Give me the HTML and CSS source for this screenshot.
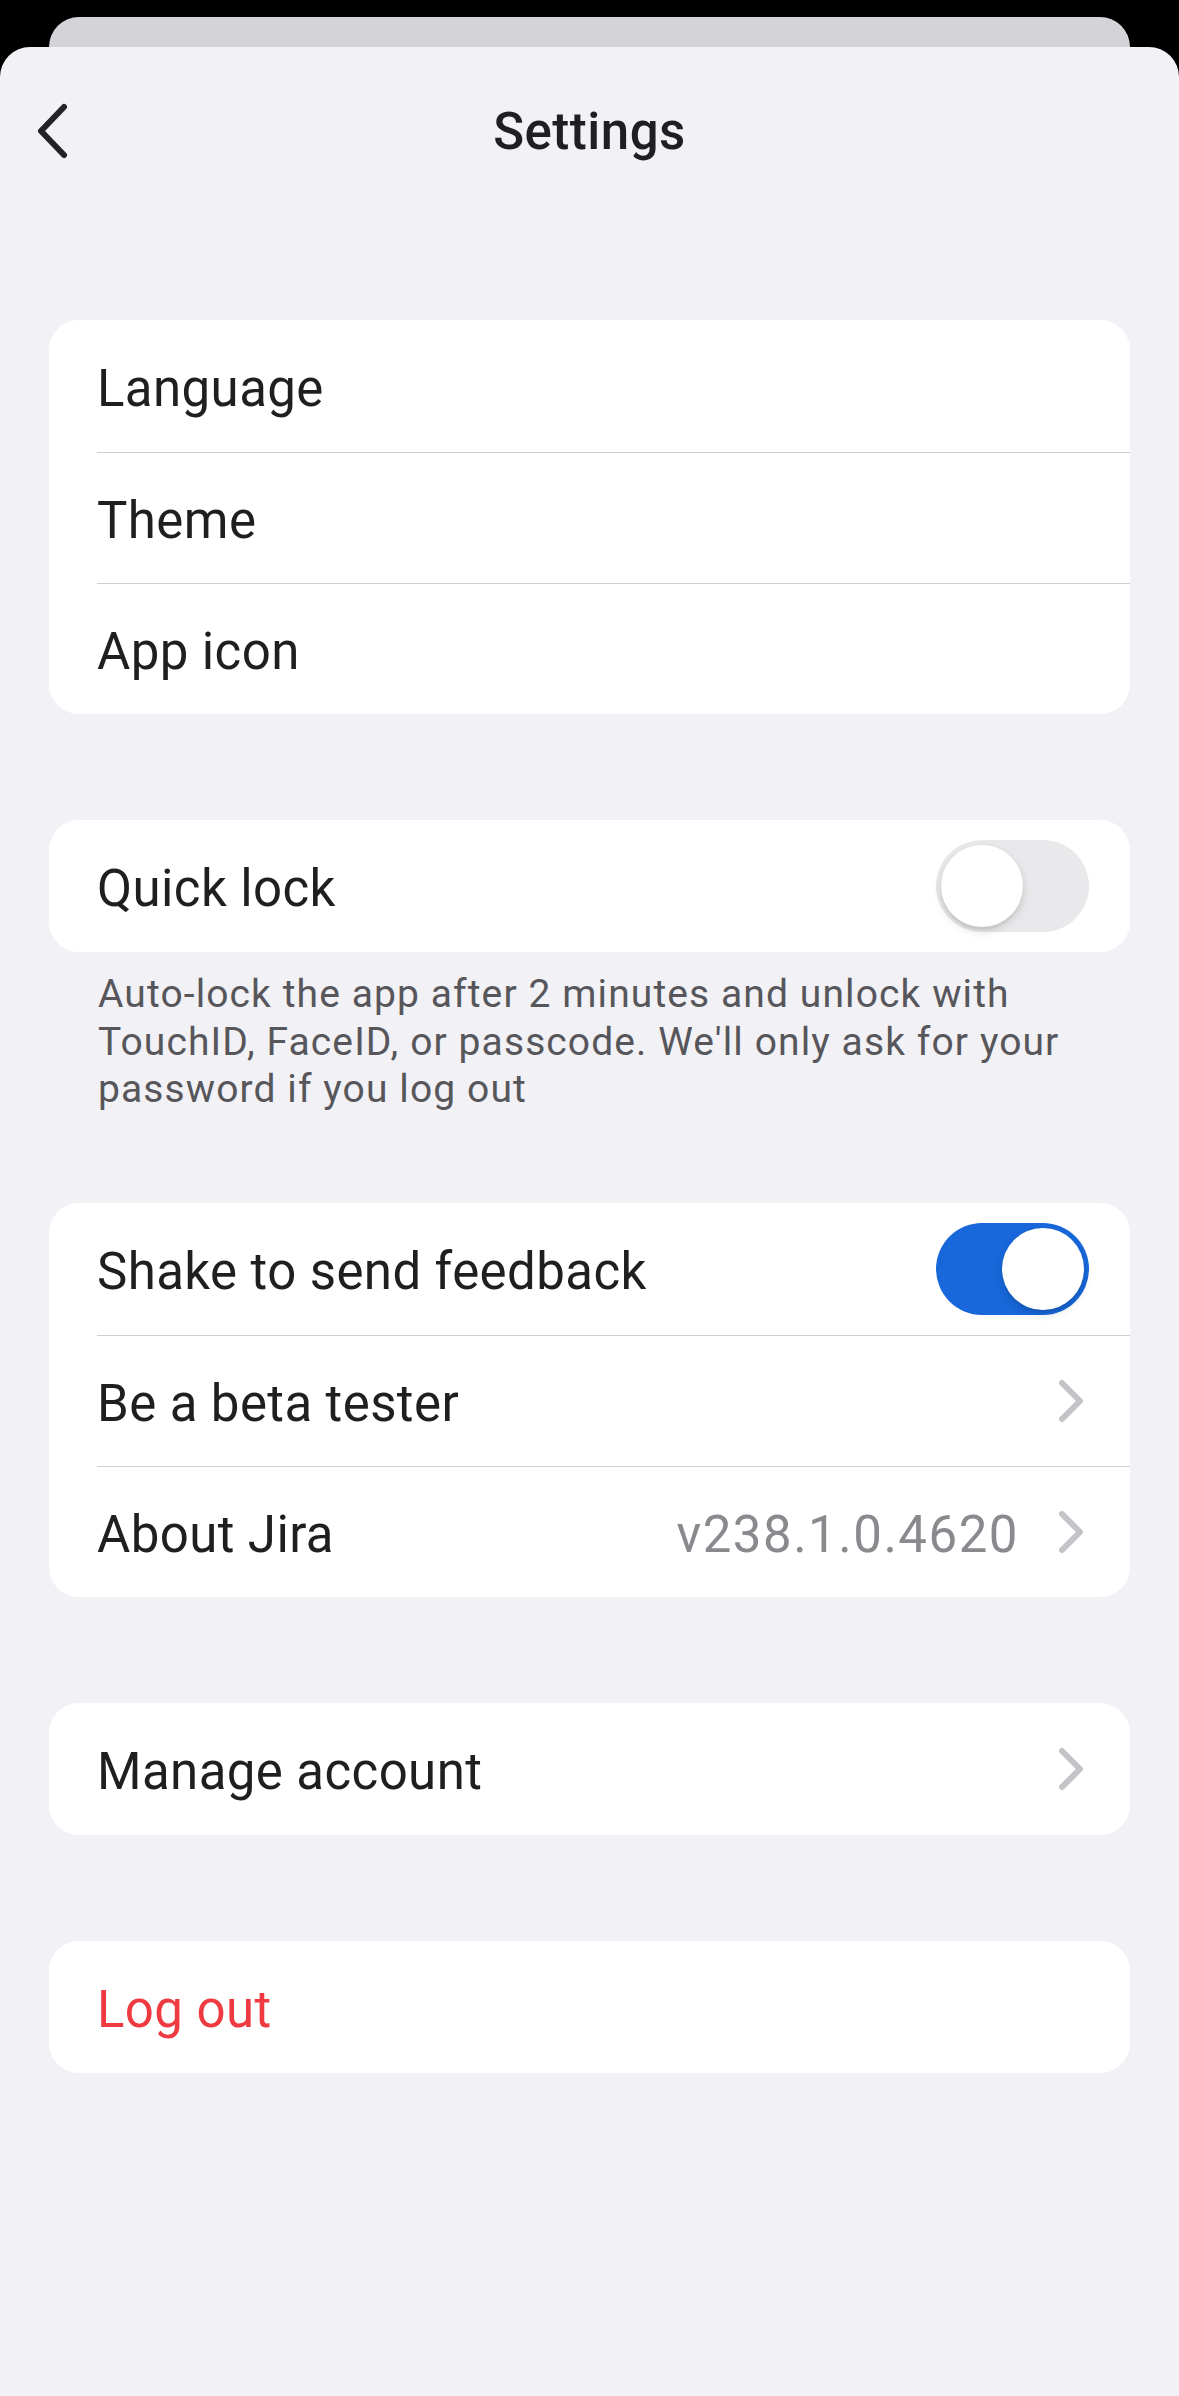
FILE: index.html
```html
<!DOCTYPE html>
<html lang="en">
<head>
<meta charset="utf-8">
<title>Settings</title>
<link rel="stylesheet" href="styles.css">
</head>
<body>
<div class="backsheet"></div>
<main class="sheet">
  <header class="nav">
    <button class="back" aria-label="Back">
      <svg width="40" height="60" viewBox="0 0 40 60"><path d="M29 6 L6 30 L29 54" fill="none" stroke="#232326" stroke-width="6" stroke-linecap="round" stroke-linejoin="round"/></svg>
    </button>
    <h1 class="title">Settings</h1>
  </header>

  <div class="content">
    <section class="card">
      <div class="row"><span class="label">Language</span></div>
      <div class="row"><span class="label">Theme</span></div>
      <div class="row"><span class="label">App icon</span></div>
    </section>

    <section class="group">
      <div class="card">
        <div class="row"><span class="label">Quick lock</span><span class="switch"><span class="knob"></span></span></div>
      </div>
      <p class="footnote">Auto-lock the app after 2 minutes and unlock with<br>TouchID, FaceID, or passcode. We'll only ask for your<br>password if you log out</p>
    </section>

    <section class="card">
      <div class="row"><span class="label">Shake to send feedback</span><span class="switch on"><span class="knob"></span></span></div>
      <div class="row"><span class="label">Be a beta tester</span><svg class="chev" width="30" height="48" viewBox="0 0 30 48"><path d="M3 6 L21 24 L3 42" fill="none" stroke="#c4c4c8" stroke-width="6" stroke-linecap="round" stroke-linejoin="round"/></svg></div>
      <div class="row"><span class="label">About Jira</span><span class="value">v238.1.0.4620</span><svg class="chev" width="30" height="48" viewBox="0 0 30 48"><path d="M3 6 L21 24 L3 42" fill="none" stroke="#c4c4c8" stroke-width="6" stroke-linecap="round" stroke-linejoin="round"/></svg></div>
    </section>

    <section class="card">
      <div class="row"><span class="label">Manage account</span><svg class="chev" width="30" height="48" viewBox="0 0 30 48"><path d="M3 6 L21 24 L3 42" fill="none" stroke="#c4c4c8" stroke-width="6" stroke-linecap="round" stroke-linejoin="round"/></svg></div>
    </section>

    <section class="card">
      <div class="row"><span class="label danger">Log out</span></div>
    </section>
  </div>
</main>
</body>
</html>
```
FILE: styles.css
```css
* { box-sizing: border-box; }

html, body {
  margin: 0;
  padding: 0;
  background: #000;
}

body {
  font-family: Roboto, "Liberation Sans", sans-serif;
  color: #1f1f21;
  padding-top: 17px;
}

.backsheet {
  height: 30px;
  margin: 0 49px;
  background: #d4d3d8;
  border-radius: 30px 30px 0 0;
}

.sheet {
  background: #f2f1f6;
  border-radius: 30px 30px 0 0;
  min-height: 2349px;
}

.nav {
  position: relative;
  height: 168px;
  display: flex;
  align-items: center;
  justify-content: center;
}

.back {
  position: absolute;
  left: 35px;
  top: 54px;
  width: 40px;
  height: 60px;
  padding: 0;
  border: 0;
  background: none;
  display: block;
}

.back svg { display: block; }

.title {
  margin: 0;
  font-size: 51px;
  line-height: 1;
  font-weight: 500;
  color: #1f1f22;
  letter-spacing: 0.5px;
}

.content {
  padding: 105px 49px 0;
  display: flex;
  flex-direction: column;
  gap: 106px;
}

.card {
  background: #fff;
  border-radius: 30px;
  overflow: hidden;
}

.row {
  height: 132px;
  margin-left: 48px;
  padding-right: 41px;
  display: flex;
  align-items: center;
}

.row + .row {
  height: 131px;
  border-top: 1px solid #cfcfd3;
}

.label {
  flex: 1;
  font-size: 51px;
  line-height: 1;
  padding-top: 5px;
  letter-spacing: 0.4px;
  color: #1f1f21;
}

.label.danger { color: #ee3a40; }

.value {
  font-size: 51px;
  line-height: 1;
  padding-top: 5px;
  letter-spacing: 1.5px;
  color: #8a8a8e;
  margin-right: 40px;
}

.chev {
  display: block;
  flex: none;
}

.switch {
  flex: none;
  width: 153px;
  height: 92px;
  border-radius: 46px;
  background: #e9e9eb;
  padding: 5px;
  display: flex;
  align-items: center;
}

.switch .knob {
  width: 82px;
  height: 82px;
  border-radius: 50%;
  background: #fff;
  box-shadow: 0 4px 10px rgba(0, 0, 0, 0.14), 0 3px 2px rgba(0, 0, 0, 0.05);
}

.switch.on {
  background: #1868db;
  justify-content: flex-end;
}

.group {
  display: flex;
  flex-direction: column;
}

.footnote {
  margin: 19px 0 0;
  padding: 0 49px;
  font-size: 39px;
  line-height: 47.5px;
  letter-spacing: 1.1px;
  color: #56565b;
}

.group + .card { margin-top: -17px; }
```
